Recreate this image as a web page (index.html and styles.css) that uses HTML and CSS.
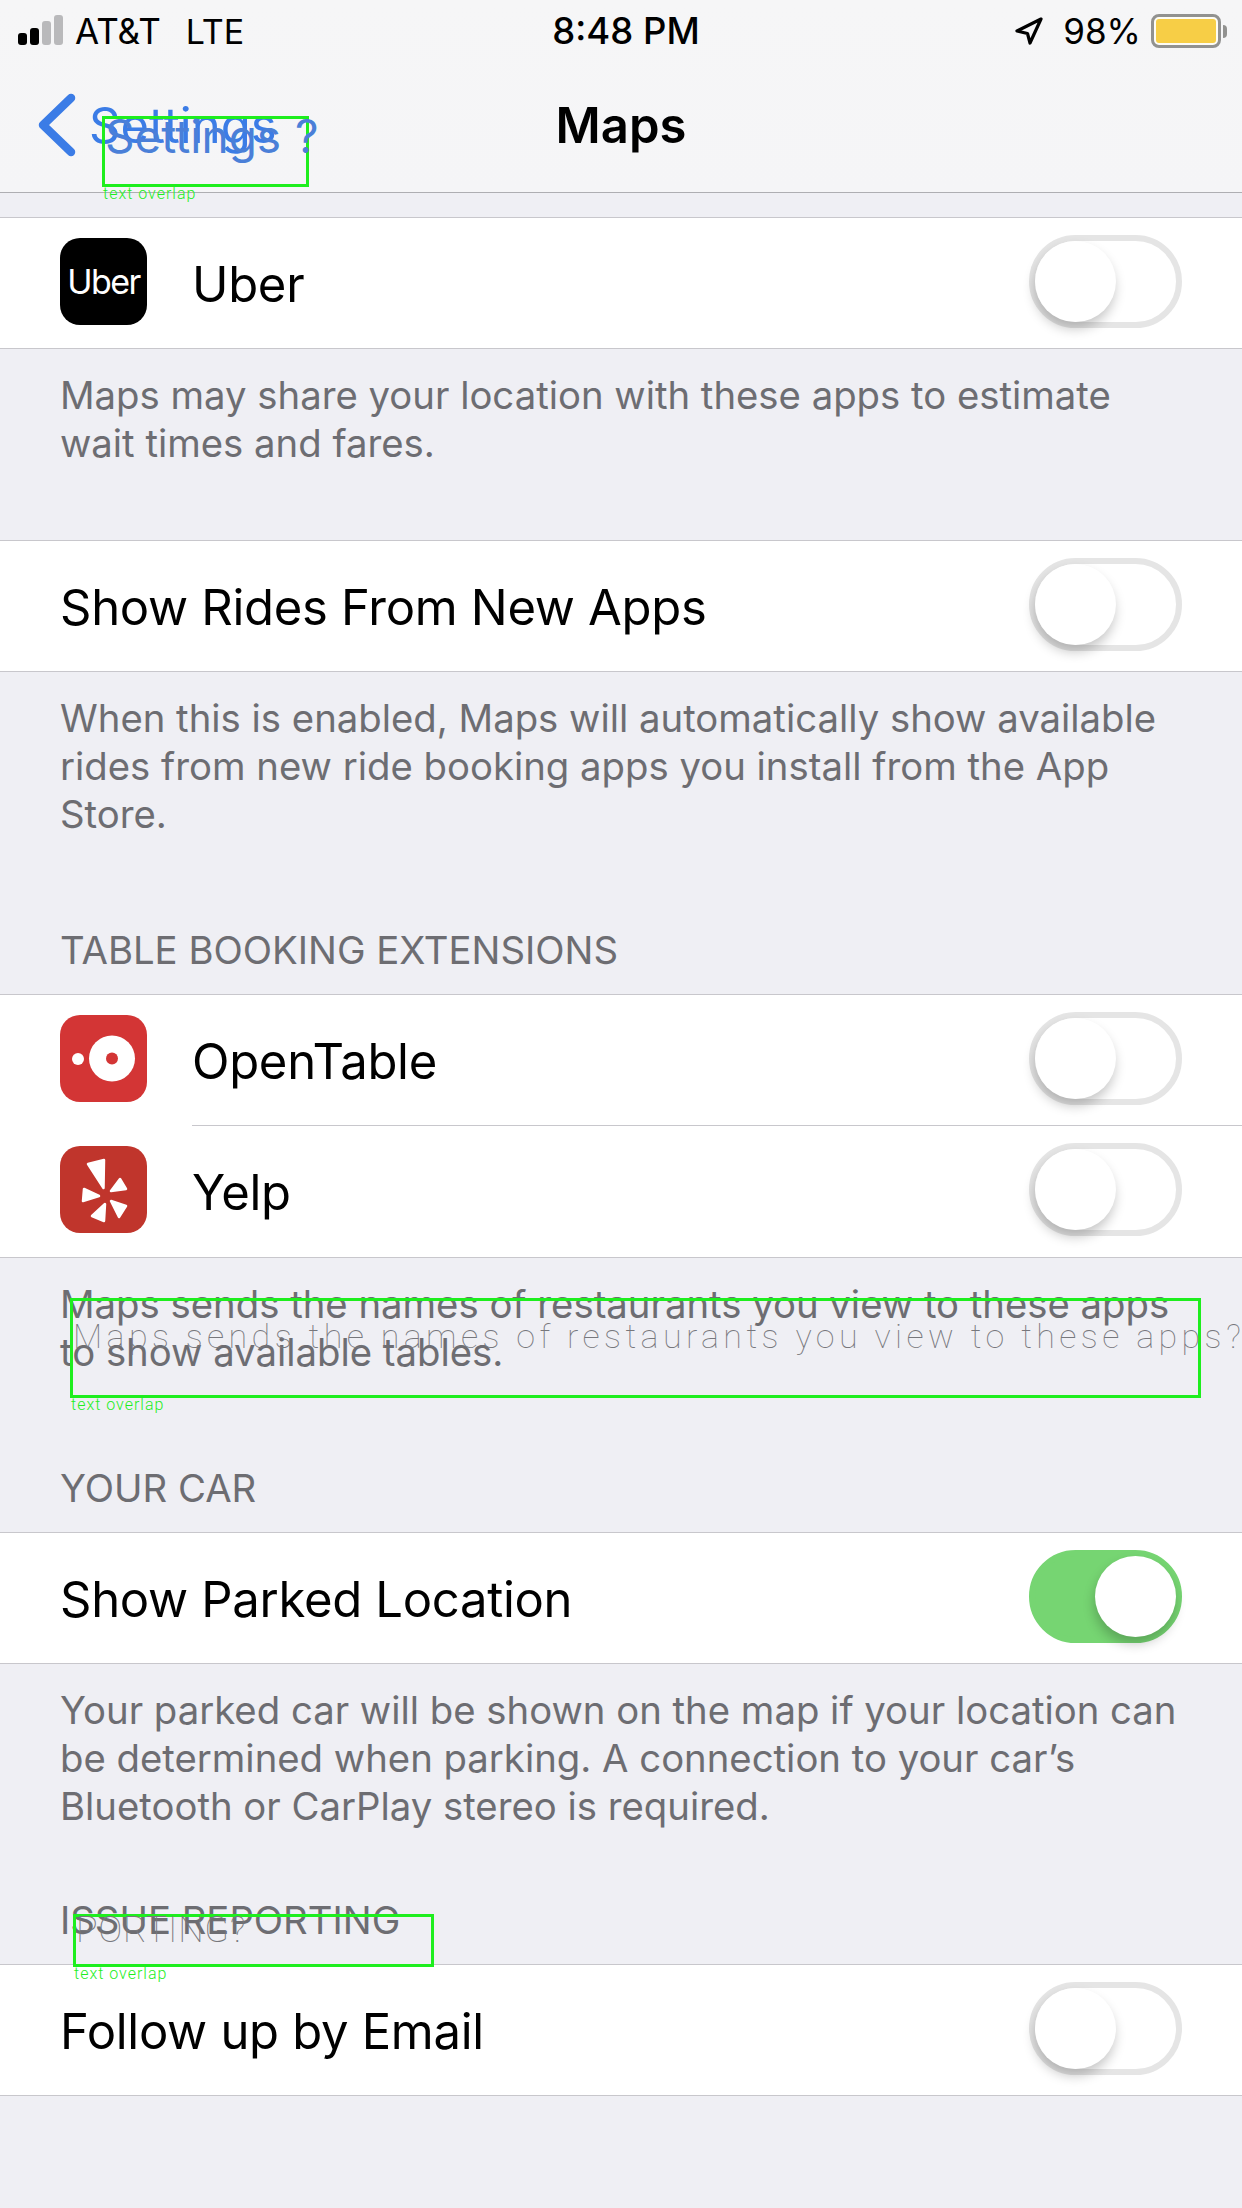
FILE: index.html
```html
<!DOCTYPE html>
<html lang="en">
<head>
<meta charset="utf-8">
<title>Maps</title>
<link rel="stylesheet" href="styles.css">
</head>
<body>
<div class="screen">
  <header class="top">
    <div class="status">
      <div class="status-left">
        <span class="signal"><i class="b1"></i><i class="b2"></i><i class="b3 dim"></i><i class="b4 dim"></i></span>
        <span>AT&amp;T</span>
        <span class="lte">LTE</span>
      </div>
      <div class="clock">8:48 PM</div>
      <div class="status-right">
        <svg class="arrow" width="28" height="28" viewBox="0 0 28 28"><path d="M26 2 2 14l10.5 2.5L15 26Z" fill="none" stroke="#000" stroke-width="3.2" stroke-linejoin="round"/></svg>
        <span class="pct">98%</span>
        <span class="battery"><span class="cell"><span class="fill"></span></span><span class="nub"></span></span>
      </div>
    </div>
    <nav class="nav">
      <div class="back">
        <svg width="38" height="64" viewBox="0 0 38 64"><path d="M33 5 5 32l28 27" fill="none" stroke="#3b7ce6" stroke-width="8.500" stroke-linecap="round" stroke-linejoin="round"/></svg>
        <span>Settings</span>
      </div>
      <div class="title">Maps</div>
      <div></div>
    </nav>
  </header>

  <main>
    <section class="group first">
      <div class="row">
        <div class="app uber"><span>Uber</span></div>
        <span class="label">Uber</span>
        <div class="toggle"><i class="knob"></i></div>
      </div>
    </section>
    <p class="foot">Maps may share your location with these apps to estimate<br>wait times and fares.</p>

    <section class="group">
      <div class="row plain">
        <span class="label">Show Rides From New Apps</span>
        <div class="toggle"><i class="knob"></i></div>
      </div>
    </section>
    <p class="foot">When this is enabled, Maps will automatically show available<br>rides from new ride booking apps you install from the App<br>Store.</p>

    <h2 class="head">TABLE BOOKING EXTENSIONS</h2>
    <section class="group">
      <div class="row">
        <div class="app opentable">
          <svg width="87" height="87" viewBox="0 0 87 87"><circle cx="18" cy="44" r="6" fill="#fff"/><circle cx="52" cy="43.500" r="23" fill="#fff"/><circle cx="52" cy="43.500" r="6" fill="#d33535"/></svg>
        </div>
        <span class="label">OpenTable</span>
        <div class="toggle"><i class="knob"></i></div>
      </div>
      <div class="row">
        <div class="app yelp">
          <svg width="87" height="87" viewBox="0 0 87 87" fill="#fff" stroke="#fff" stroke-width="2.500" stroke-linejoin="round"><path d="M28 18 44 14 43.500 42Z"/><path d="M51 45 60 33 66 43Z"/><path d="M51 55 66 60 59 71Z"/><path d="M45 58 44 75 32 70Z"/><path d="M39 50 24 43 23 55Z"/></svg>
        </div>
        <span class="label">Yelp</span>
        <div class="toggle"><i class="knob"></i></div>
      </div>
    </section>
    <p class="foot">Maps sends the names of restaurants you view to these apps<br>to show available tables.</p>

    <h2 class="head">YOUR CAR</h2>
    <section class="group">
      <div class="row plain">
        <span class="label">Show Parked Location</span>
        <div class="toggle on"><i class="knob"></i></div>
      </div>
    </section>
    <p class="foot">Your parked car will be shown on the map if your location can<br>be determined when parking. A connection to your car’s<br>Bluetooth or CarPlay stereo is required.</p>

    <h2 class="head tight">ISSUE REPORTING</h2>
    <section class="group">
      <div class="row plain">
        <span class="label">Follow up by Email</span>
        <div class="toggle"><i class="knob"></i></div>
      </div>
    </section>
  </main>

  <div class="mark m1"><span class="ghost">Settings ?</span><span class="tag">text overlap</span></div>
  <div class="mark m2"><span class="ghost">Maps sends the names of restaurants you view to these apps?</span><span class="tag">text overlap</span></div>
  <div class="mark m3"><span class="ghost">PORTING?</span><span class="tag">text overlap</span></div>
</div>
</body>
</html>
```
FILE: styles.css
```css
* { box-sizing: border-box; }
html, body { margin: 0; padding: 0; }
body { background: #efeff4; font-family: Inter, "Liberation Sans", sans-serif; color: #000; }
.screen { position: relative; width: 1242px; height: 2208px; overflow: hidden; background: #efeff4; }

.top { height: 193px; background: linear-gradient(#f6f6f7, #f5f5f7); border-bottom: 1px solid #aeaeb2; }
.status { height: 62px; display: grid; grid-template-columns: 1fr auto 1fr; align-items: center; font-size: 35px; padding: 0 12px 0 22px; }
.status-left { display: flex; align-items: center; gap: 12px; margin-left: -4px; }
.lte { margin-left: 13px; font-size: 34px; }
.signal { display: flex; align-items: flex-end; gap: 3px; height: 30px; margin-top: -2px; }
.signal i { width: 9px; border-radius: 3px; background: #000; display: block; }
.signal .b1 { height: 12px; }
.signal .b2 { height: 17px; }
.signal .b3 { height: 24px; }
.signal .b4 { height: 30px; }
.signal .dim { background: #b9b9bb; }
.clock { font-weight: 500; font-size: 36.500px; }
.status-right { display: flex; justify-content: flex-end; align-items: center; margin-right: 3px; }
.arrow { margin-right: 20px; }
.pct { margin-right: 10px; }
.battery { display: flex; align-items: center; }
.cell { width: 70px; height: 34px; border: 3px solid #929290; border-radius: 8px; padding: 2px; background: #fdfcf5; display: block; }
.fill { display: block; height: 100%; background: #f7ce46; border-radius: 3px; }
.nub { width: 4px; height: 13px; background: #929290; border-radius: 0 4px 4px 0; margin-left: 2px; }

.nav { height: 130px; display: grid; grid-template-columns: 1fr auto 1fr; align-items: center; padding-bottom: 4px; }
.back { display: flex; align-items: center; gap: 13px; margin-left: 38px; color: #3b7ce6; font-size: 49px; }
.title { font-weight: 600; font-size: 49px; }

.group { background: #fff; border-top: 1px solid #c8c7cc; border-bottom: 1px solid #c8c7cc; }
.group.first { margin-top: 24px; }
.foot + .group { margin-top: 73px; }
.row { height: 130px; display: flex; align-items: center; padding: 0 60px 3px; position: relative; }
.row + .row { height: 132px; }
.row + .row::before { content: ""; position: absolute; left: 192px; right: 0; top: 0; border-top: 1px solid #c8c7cc; }
.label { flex: 1; font-size: 49px; letter-spacing: -0.3px; padding-top: 6px; }
.app { width: 87px; height: 87px; border-radius: 20px; margin-right: 45px; flex: none; display: flex; align-items: center; justify-content: center; }
.app svg { display: block; }
.uber { background: #000; color: #fff; font-size: 34px; letter-spacing: -1.500px; }
.opentable { background: #d33535; }
.yelp { background: #c0352c; }

.toggle { width: 153px; height: 93px; border: 6px solid #e5e5e5; border-radius: 47px; background: #fff; display: flex; justify-content: flex-start; flex: none; }
.toggle.on { background: #76d572; border-color: #76d572; justify-content: flex-end; }
.knob { display: block; width: 81px; height: 81px; border-radius: 50%; background: #fff; box-shadow: -1px 7px 12px rgba(0,0,0,.22); }

.foot { margin: 0; padding: 22px 60px 0; font-size: 38.300px; line-height: 48px; color: #6d6d72; }
.head { margin: 88px 0 0; padding: 0 60px 20px; font-size: 38.300px; line-height: 48px; font-weight: 400; color: #6d6d72; }
.head.tight { margin-top: 66px; }

.mark { position: absolute; border: 3px solid #1eee1e; }
.ghost { position: absolute; white-space: nowrap; font-family: Roboto, sans-serif; font-weight: 100; }
.tag { position: absolute; left: -2px; top: 100%; white-space: nowrap; font-family: Roboto, sans-serif; font-weight: 300; color: #1eee1e; font-size: 16px; line-height: 20px; letter-spacing: 1px; }
.m1 { left: 102px; top: 116px; width: 207px; height: 71px; }
.m1 .ghost { left: 0; top: -10px; font-size: 46px; line-height: 54px; color: #4a7fd8; font-family: Inter, sans-serif; font-weight: 400; word-spacing: 1px; }
.m2 { left: 70px; top: 1298px; width: 1131px; height: 100px; }
.m2 .ghost { left: 0; top: 15px; font-size: 34px; line-height: 40px; color: #77777c; letter-spacing: 4.400px; }
.m3 { left: 73px; top: 1914px; width: 361px; height: 53px; }
.m3 .ghost { left: 0; top: -7px; font-size: 36px; line-height: 40px; color: #77777c; letter-spacing: 0.700px; }
```
